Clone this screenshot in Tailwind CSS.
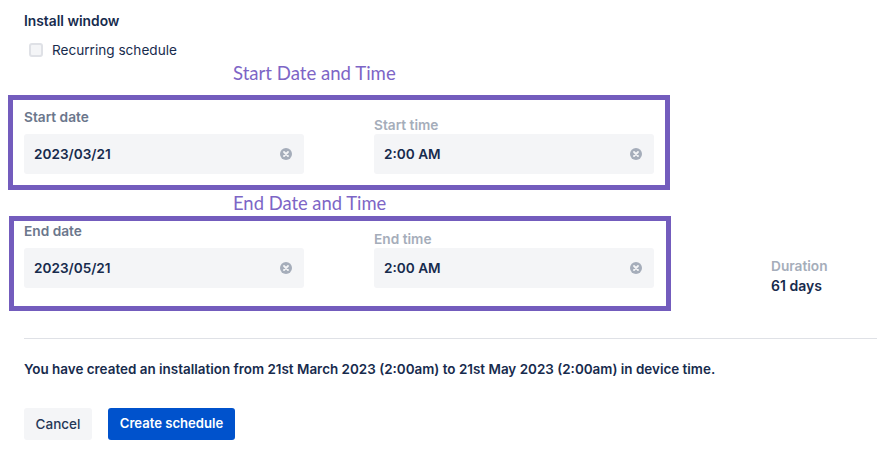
<!DOCTYPE html>
<html lang="en">
<head>
    <meta charset="UTF-8">
    <title>Install window</title>
    <script src="https://cdn.jsdelivr.net/npm/@tailwindcss/browser@4"></script>
</head>
<body class="bg-white text-[#172b4d] font-['Inter','Liberation_Sans',sans-serif] overflow-hidden">
    <div class="relative w-[877px] h-[466px] pl-6 pt-[13px]">
        <!-- Install window -->
        <h2 class="text-[13.8px] leading-4 font-semibold">Install window</h2>
        <label class="flex items-center gap-[9px] ml-[5px] mt-[13px] h-4 text-[13.6px]">
            <span class="w-[14px] h-[14px] rounded-[3px] bg-[#f4f5f7] border-2 border-[#dfe1e6]"></span>
            Recurring schedule
        </label>

        <!-- Start row -->
        <div class="flex items-end gap-[70px] mt-[51px]">
            <div class="w-[280px]">
                <div class="text-[13.7px] leading-4 font-semibold text-[#6b778c] mb-[9px]">Start date</div>
                <div class="flex items-center justify-between h-10 pl-[10px] pr-3 bg-[#f4f5f7] rounded-[3px] text-[13.6px] font-semibold">
                    2023/03/21
                    <svg class="w-3 h-3" viewBox="0 0 12 12"><circle cx="6" cy="6" r="6" fill="#a5adba"/><path d="M4 4l4 4M8 4l-4 4" stroke="#f4f5f7" stroke-width="1.8" stroke-linecap="round"/></svg>
                </div>
            </div>
            <div class="w-[280px]">
                <div class="text-[13.7px] leading-4 font-semibold text-[#a5adba] mb-px">Start time</div>
                <div class="flex items-center justify-between h-10 pl-[10px] pr-3 bg-[#f4f5f7] rounded-[3px] text-[13.6px] font-semibold">
                    2:00 AM
                    <svg class="w-3 h-3" viewBox="0 0 12 12"><circle cx="6" cy="6" r="6" fill="#a5adba"/><path d="M4 4l4 4M8 4l-4 4" stroke="#f4f5f7" stroke-width="1.8" stroke-linecap="round"/></svg>
                </div>
            </div>
        </div>

        <!-- End row -->
        <div class="flex items-end mt-[49px]">
            <div class="w-[280px]">
                <div class="text-[13.7px] leading-4 font-semibold text-[#6b778c] mb-[9px]">End date</div>
                <div class="flex items-center justify-between h-10 pl-[10px] pr-3 bg-[#f4f5f7] rounded-[3px] text-[13.6px] font-semibold">
                    2023/05/21
                    <svg class="w-3 h-3" viewBox="0 0 12 12"><circle cx="6" cy="6" r="6" fill="#a5adba"/><path d="M4 4l4 4M8 4l-4 4" stroke="#f4f5f7" stroke-width="1.8" stroke-linecap="round"/></svg>
                </div>
            </div>
            <div class="w-[280px] ml-[70px]">
                <div class="text-[13.7px] leading-4 font-semibold text-[#a5adba] mb-px">End time</div>
                <div class="flex items-center justify-between h-10 pl-[10px] pr-3 bg-[#f4f5f7] rounded-[3px] text-[13.6px] font-semibold">
                    2:00 AM
                    <svg class="w-3 h-3" viewBox="0 0 12 12"><circle cx="6" cy="6" r="6" fill="#a5adba"/><path d="M4 4l4 4M8 4l-4 4" stroke="#f4f5f7" stroke-width="1.8" stroke-linecap="round"/></svg>
                </div>
            </div>
            <div class="ml-[117px] -mb-[7px]">
                <div class="text-[13.7px] leading-[19px] font-semibold text-[#a5adba]">Duration</div>
                <div class="text-[14px] leading-[19px] font-semibold">61 days</div>
            </div>
        </div>

        <hr class="mt-[50px] border-[#dfe1e6]">

        <p class="mt-[22px] text-[13.45px] leading-4 font-semibold">You have created an installation from 21st March 2023 (2:00am) to 21st May 2023 (2:00am) in device time.</p>

        <div class="flex gap-4 mt-[31px]">
            <button class="h-8 w-[68px] rounded-[3px] bg-[#f4f5f7] text-[13.5px] font-medium text-[#253858]">Cancel</button>
            <button class="h-8 w-[127px] rounded-[3px] bg-[#0052cc] text-[13.1px] font-semibold text-white">Create schedule</button>
        </div>

        <!-- Annotations drawn on top of the form -->
        <div class="absolute left-[233px] top-[62px] text-[18.6px] leading-[22px] text-[#7d65c6] font-['Lato',sans-serif]">Start Date and Time</div>
        <div class="absolute left-[8px] top-[95px] w-[662px] h-[95px] border-[5px] border-[#735cbd]"></div>
        <div class="absolute left-[233px] top-[192px] text-[18.4px] leading-[22px] text-[#7d65c6] font-['Lato',sans-serif]">End Date and Time</div>
        <div class="absolute left-[9px] top-[216px] w-[662px] h-[95px] border-[5px] border-[#735cbd]"></div>
    </div>
</body>
</html>
